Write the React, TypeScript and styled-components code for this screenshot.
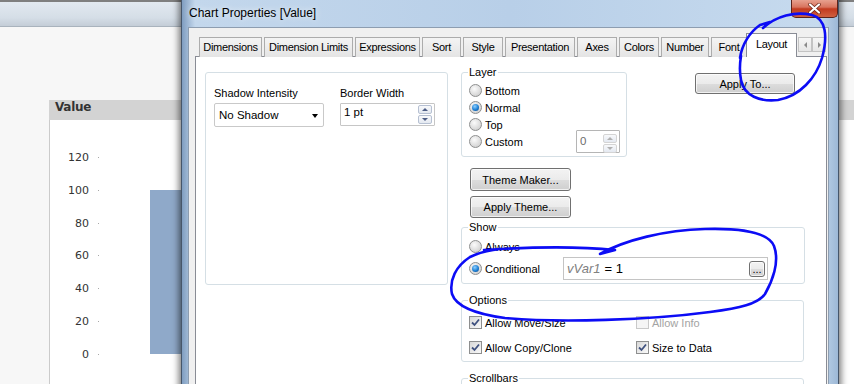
import React from 'react';
import styled, { createGlobalStyle } from 'styled-components';

const GlobalStyle = createGlobalStyle`
  html, body { margin: 0; padding: 0; }
  body {
    background: #f7f7f7;
    font-family: "Liberation Sans", Arial, sans-serif;
    font-size: 11px;
    color: #000;
  }
`;

const Desktop = styled.div`
  position: relative;
  width: 854px;
  height: 384px;
  overflow: hidden;
  background: #f7f7f7;
`;

/* ---------- QlikView main window behind the dialog ---------- */

const AppWindow = styled.div`
  display: flex;
  flex-direction: column;
  height: 100%;
`;

const AppTitle = styled.div`
  height: 24px;
  flex-shrink: 0;
  border-top: 2px solid #7f7f7f;
  border-bottom: 1px solid #a9b3bd;
  background: linear-gradient(#e2e9f0, #d5dee7 65%, #c4cdd7);
`;

const Sheet = styled.div`
  flex: 1;
  min-height: 0;
  background: #f7f7f7;
  padding: 73px 0 0 49px;
`;

const ChartBox = styled.div`
  width: 820px;
`;

const ChartHeader = styled.div`
  height: 20px;
  line-height: 20px;
  padding-left: 6px;
  background: #d3d3d3;
  font: bold 12px "DejaVu Sans", Verdana, sans-serif;
  letter-spacing: -0.3px;
  color: #333;
`;

const ChartBody = styled.div`
  height: 264px;
  display: flex;
  align-items: flex-start;
  background: #fff;
  border-left: 1px solid #cbcbcb;
`;

const Axis = styled.div`
  display: flex;
  flex-direction: column;
  padding-top: 21px;
  width: 49px;
`;

const AxisRow = styled.div`
  height: 32.83px;
  display: flex;
  align-items: center;
  justify-content: flex-end;
  gap: 9px;
  font: 11px "DejaVu Sans", Verdana, sans-serif;
  color: #333;
`;

const Tick = styled.span`
  width: 1px;
  height: 1px;
  background: #a8a8a8;
`;

const Plot = styled.div`
  margin: 37px 0 0 51px;
  height: 197px;
  display: flex;
  align-items: flex-end;
`;

const Bar = styled.div`
  width: 60px;
  background: #8fa9c9;
`;

/* ---------- Chart Properties dialog ---------- */

const Dialog = styled.div`
  position: absolute;
  left: 181px;
  top: -7px;
  width: 658px;
  height: 420px;
  box-sizing: border-box;
  border: 1px solid #46566a;
  border-radius: 7px 7px 0 0;
  background: linear-gradient(90deg, #7f9dc0, #c3d7ec 2%, #b8cfe8 50%, #c6daee 97%, #9db8d6);
  box-shadow: 0 0 7px 2px rgba(0, 0, 0, 0.55);
  padding: 0 9px 0 6px;
  display: flex;
  flex-direction: column;
`;

const TitleBar = styled.div`
  height: 33px;
  display: flex;
  align-items: flex-start;
  flex-shrink: 0;
`;

const Title = styled.div`
  margin-top: 12px;
  padding-left: 1px;
  font-size: 12px;
  line-height: 14px;
  color: #000;
  text-shadow: 0 0 6px rgba(255, 255, 255, 0.9);
`;

const CloseButton = styled.div`
  margin: 5px -9px 0 auto;
  width: 47px;
  height: 19px;
  box-sizing: border-box;
  border: 1px solid #5b231a;
  border-top: 0;
  border-radius: 0 0 5px 5px;
  background: linear-gradient(#e9a796, #d8745e 45%, #c23a1f 55%, #d0603f);
  display: flex;
  align-items: center;
  justify-content: center;
`;

const Client = styled.div`
  flex: 1;
  border: 1px solid #8d9db0;
  background: #f0f0f0;
  padding: 5px 1px 0 6px;
  display: flex;
  flex-direction: column;
`;

const TabStrip = styled.div`
  height: 24px;
  display: flex;
  align-items: flex-end;
  padding-left: 4px;
  flex-shrink: 0;
`;

const Tab = styled.div<{ $w: number; $active?: boolean }>`
  width: ${p => p.$w}px;
  height: ${p => (p.$active ? 24 : 20)}px;
  box-sizing: border-box;
  border: 1px solid ${p => (p.$active ? '#898c95' : '#acacac')};
  border-bottom: 0;
  background: ${p => (p.$active ? '#fff' : 'linear-gradient(#f4f4f4, #e4e4e4)')};
  margin: 0 ${p => (p.$active ? 1 : 2)}px 0 ${p => (p.$active ? -3 : 0)}px;
  position: relative;
  z-index: ${p => (p.$active ? 1 : 0)};
  text-align: center;
  line-height: ${p => (p.$active ? 21 : 18)}px;
  letter-spacing: -0.3px;
  white-space: nowrap;
`;

const TabScroll = styled.div`
  align-self: flex-start;
  margin-top: 4px;
  display: flex;
`;

const ScrollArrow = styled.div<{ $dir: 'left' | 'right' }>`
  width: 14px;
  height: 15px;
  box-sizing: border-box;
  border: 1px solid #c3c3c3;
  background: linear-gradient(#f6f6f6, #e6e6e6);
  display: flex;
  align-items: center;
  justify-content: center;
  &::after {
    content: '';
    border-top: 3px solid transparent;
    border-bottom: 3px solid transparent;
    ${p => (p.$dir === 'left' ? 'border-right: 3px solid #8a8a8a;' : 'border-left: 3px solid #8a8a8a;')}
  }
`;

const Panel = styled.div`
  flex: 1;
  margin-top: -1px;
  border: 1px solid #898c95;
  background: #fff;
  padding: 9px 0 0 9px;
  display: flex;
  align-items: flex-start;
  gap: 13px;
`;

const PlainBox = styled.div`
  width: 243px;
  height: 213px;
  margin-top: 6px;
  box-sizing: border-box;
  border: 1px solid #d5dfe5;
  border-radius: 3px;
  padding: 14px 8px 0;
  display: flex;
  align-items: flex-start;
  gap: 16px;
`;

const Field = styled.div`
  display: flex;
  flex-direction: column;
  gap: 3px;
`;

const FieldLabel = styled.div`
  line-height: 13px;
`;

const Combo = styled.div`
  width: 110px;
  height: 24px;
  box-sizing: border-box;
  border: 1px solid #c9c9c9;
  border-radius: 2px;
  background: #fff;
  padding-left: 4px;
  display: flex;
  align-items: center;
  font-size: 11.5px;
  &::after {
    content: '';
    margin: 1px 5px 0 auto;
    border-top: 4px solid #000;
    border-left: 3.5px solid transparent;
    border-right: 3.5px solid transparent;
  }
`;

const SpinEdit = styled.div<{ $w: number; $disabled?: boolean }>`
  width: ${p => p.$w}px;
  height: 23px;
  box-sizing: border-box;
  border: 1px solid ${p => (p.$disabled ? '#b5b5b5' : '#c6c6c6')};
  border-radius: 1px;
  background: #fff;
  display: flex;
  align-items: flex-start;
  padding: ${p => (p.$disabled ? 4 : 2)}px 2px 0 3px;
  color: ${p => (p.$disabled ? '#6d6d6d' : '#000')};
  font-size: 11.5px;
`;

const SpinValue = styled.span`
  flex: 1;
`;

const SpinButtons = styled.div`
  display: flex;
  flex-direction: column;
  gap: 1px;
  margin-top: -1px;
`;

const SpinArrow = styled.div<{ $up?: boolean; $disabled?: boolean }>`
  width: 14px;
  height: 9px;
  box-sizing: border-box;
  border: 1px solid ${p => (p.$disabled ? '#d4d4d4' : '#b6c0d2')};
  border-radius: 2px;
  background: linear-gradient(#f8f9fb, #e4e9f1);
  display: flex;
  align-items: center;
  justify-content: center;
  &::after {
    content: '';
    border-left: 3px solid transparent;
    border-right: 3px solid transparent;
    ${p =>
      p.$up
        ? `border-bottom: 3px solid ${p.$disabled ? '#b0b0b0' : '#4d5d85'};`
        : `border-top: 3px solid ${p.$disabled ? '#b0b0b0' : '#4d5d85'};`}
  }
`;

const RightCol = styled.div`
  width: 344px;
  display: flex;
  flex-direction: column;
  align-items: flex-start;
`;

const TopRow = styled.div`
  display: flex;
  align-items: flex-start;
`;

const Group = styled.fieldset<{ $w: number; $pt: number; $pb: number; $mt?: number }>`
  margin: ${p => p.$mt ?? 0}px 0 0;
  width: ${p => p.$w}px;
  min-width: 0;
  box-sizing: border-box;
  border: 1px solid #d5dfe5;
  border-radius: 3px;
  padding: ${p => p.$pt}px 6px ${p => p.$pb}px 7px;
`;

const Legend = styled.legend`
  padding: 0 1px;
  margin-left: -1px;
  font-size: 11px;
  line-height: 13px;
`;

const Stack = styled.div`
  display: flex;
  flex-direction: column;
`;

const RadioRow = styled.div<{ $h?: number; $mt?: number }>`
  height: ${p => p.$h ?? 17}px;
  margin-top: ${p => p.$mt ?? 0}px;
  display: flex;
  align-items: center;
`;

const RadioItem = styled.label<{ $w?: number }>`
  display: flex;
  align-items: center;
  gap: 3px;
  width: ${p => (p.$w ? `${p.$w}px` : 'auto')};
  flex-shrink: 0;
`;

const RadioDot = styled.span<{ $on?: boolean }>`
  width: 13px;
  height: 13px;
  box-sizing: border-box;
  border-radius: 50%;
  border: 1px solid #8e8f8f;
  background: radial-gradient(circle at 40% 35%, #fbfbfb, #d6d6d6 70%, #c4c4c4);
  display: flex;
  align-items: center;
  justify-content: center;
  &::after {
    content: '';
    display: ${p => (p.$on ? 'block' : 'none')};
    width: 7px;
    height: 7px;
    border-radius: 50%;
    background: radial-gradient(circle at 40% 35%, #8fd0ff, #1c7fd4 55%, #0c3f7c);
  }
`;

const PushButton = styled.div<{ $w: number; $h: number; $mt?: number; $ml?: number }>`
  width: ${p => p.$w}px;
  height: ${p => p.$h}px;
  margin: ${p => p.$mt ?? 0}px 0 0 ${p => p.$ml ?? 0}px;
  box-sizing: border-box;
  border: 1px solid #707070;
  border-radius: 3px;
  background: linear-gradient(#f3f3f3 0%, #ebebeb 50%, #dddddd 51%, #cfcfcf 100%);
  box-shadow: inset 0 0 0 1px rgba(255, 255, 255, 0.7);
  display: flex;
  align-items: center;
  justify-content: center;
  flex-shrink: 0;
  color: #000;
  font-size: 11px;
`;

const ExprBox = styled.div`
  width: 205px;
  height: 23px;
  box-sizing: border-box;
  border: 1px solid #c4c4c4;
  background: #fff;
  padding: 0 2px 0 3px;
  display: flex;
  align-items: center;
  font-size: 13px;
`;

const ExprVar = styled.i`
  color: #808080;
  margin-right: 4px;
`;

const ExprText = styled.span`
  flex: 1;
`;

const OptionsGrid = styled.div`
  display: grid;
  grid-template-columns: 167px auto;
  row-gap: 8px;
`;

const CheckItem = styled.label<{ $disabled?: boolean }>`
  height: 17px;
  display: flex;
  align-items: center;
  gap: 3px;
  color: ${p => (p.$disabled ? '#a3a3a3' : '#000')};
`;

const CheckBox = styled.span<{ $disabled?: boolean }>`
  width: 13px;
  height: 13px;
  box-sizing: border-box;
  border: 1px solid ${p => (p.$disabled ? '#c9c9c9' : '#8e8f8f')};
  background: ${p => (p.$disabled ? '#f5f5f5' : 'linear-gradient(135deg, #d8d8d8, #f9f9f9)')};
  display: flex;
  align-items: center;
  justify-content: center;
`;

const Ink = styled.svg`
  position: absolute;
  left: 0;
  top: 0;
  z-index: 10;
  pointer-events: none;
`;

const tabs = [
  { label: 'Dimensions', w: 63 },
  { label: 'Dimension Limits', w: 89 },
  { label: 'Expressions', w: 65 },
  { label: 'Sort', w: 39 },
  { label: 'Style', w: 40 },
  { label: 'Presentation', w: 70 },
  { label: 'Axes', w: 40 },
  { label: 'Colors', w: 40 },
  { label: 'Number', w: 48 },
  { label: 'Font', w: 36 },
  { label: 'Layout', w: 51, active: true },
];

const axisValues = [120, 100, 80, 60, 40, 20, 0];
const barValue = 100;

const Check = () => (
  <svg width="9" height="9" viewBox="0 0 9 9">
    <path d="M1 4.5 L3.5 7 L8 1.5" fill="none" stroke="#3f517f" strokeWidth="1.8" />
  </svg>
);

export default function App() {
  return (
    <Desktop>
      <GlobalStyle />
      <AppWindow>
        <AppTitle />
        <Sheet>
          <ChartBox>
            <ChartHeader>Value</ChartHeader>
            <ChartBody>
              <Axis>
                {axisValues.map(v => (
                  <AxisRow key={v}>
                    {v}
                    <Tick />
                  </AxisRow>
                ))}
              </Axis>
              <Plot>
                <Bar style={{ height: `${(barValue / 120) * 197}px` }} />
              </Plot>
            </ChartBody>
          </ChartBox>
        </Sheet>
      </AppWindow>

      <Dialog>
        <TitleBar>
          <Title>Chart Properties [Value]</Title>
          <CloseButton>
            <svg width="13" height="11" viewBox="0 0 13 11">
              <path d="M2 1.5 L11 9.5 M11 1.5 L2 9.5" stroke="#6a2416" strokeWidth="3.6" strokeLinecap="round" />
              <path d="M2 1.5 L11 9.5 M11 1.5 L2 9.5" stroke="#fff" strokeWidth="2.2" strokeLinecap="round" />
            </svg>
          </CloseButton>
        </TitleBar>
        <Client>
          <TabStrip>
            {tabs.map(t => (
              <Tab key={t.label} $w={t.w} $active={t.active}>
                {t.label}
              </Tab>
            ))}
            <TabScroll>
              <ScrollArrow $dir="left" />
              <ScrollArrow $dir="right" />
            </TabScroll>
          </TabStrip>
          <Panel>
            <PlainBox>
              <Field>
                <FieldLabel>Shadow Intensity</FieldLabel>
                <Combo>No Shadow</Combo>
              </Field>
              <Field>
                <FieldLabel>Border Width</FieldLabel>
                <SpinEdit $w={95}>
                  <SpinValue>1 pt</SpinValue>
                  <SpinButtons>
                    <SpinArrow $up />
                    <SpinArrow />
                  </SpinButtons>
                </SpinEdit>
              </Field>
            </PlainBox>

            <RightCol>
              <TopRow>
                <Group $w={166} $pt={3} $pb={6}>
                  <Legend>Layer</Legend>
                  <Stack>
                    <RadioRow>
                      <RadioItem><RadioDot />Bottom</RadioItem>
                    </RadioRow>
                    <RadioRow>
                      <RadioItem><RadioDot $on />Normal</RadioItem>
                    </RadioRow>
                    <RadioRow>
                      <RadioItem><RadioDot />Top</RadioItem>
                    </RadioRow>
                    <RadioRow>
                      <RadioItem $w={107}><RadioDot />Custom</RadioItem>
                      <SpinEdit $w={44} $disabled style={{ margin: '-3px 0' }}>
                        <SpinValue>0</SpinValue>
                        <SpinButtons>
                          <SpinArrow $up $disabled />
                          <SpinArrow $disabled />
                        </SpinButtons>
                      </SpinEdit>
                    </RadioRow>
                  </Stack>
                </Group>
                <PushButton $w={100} $h={21} $mt={7} $ml={68}>Apply To...</PushButton>
              </TopRow>

              <PushButton $w={101} $h={23} $mt={11} $ml={9}>Theme Maker...</PushButton>
              <PushButton $w={101} $h={22} $mt={5} $ml={9}>Apply Theme...</PushButton>

              <Group $w={344} $pt={4} $pb={3} $mt={3}>
                <Legend>Show</Legend>
                <Stack>
                  <RadioRow>
                    <RadioItem><RadioDot />Always</RadioItem>
                  </RadioRow>
                  <RadioRow $h={23} $mt={2}>
                    <RadioItem $w={94}><RadioDot $on />Conditional</RadioItem>
                    <ExprBox>
                      <ExprVar>vVar1</ExprVar>
                      <ExprText>= 1</ExprText>
                      <PushButton $w={16} $h={16}>...</PushButton>
                    </ExprBox>
                  </RadioRow>
                </Stack>
              </Group>

              <Group $w={343} $pt={7} $pb={5} $mt={10}>
                <Legend>Options</Legend>
                <OptionsGrid>
                  <CheckItem><CheckBox><Check /></CheckBox>Allow Move/Size</CheckItem>
                  <CheckItem $disabled><CheckBox $disabled />Allow Info</CheckItem>
                  <CheckItem><CheckBox><Check /></CheckBox>Allow Copy/Clone</CheckItem>
                  <CheckItem><CheckBox><Check /></CheckBox>Size to Data</CheckItem>
                </OptionsGrid>
              </Group>

              <Group $w={343} $pt={40} $pb={0} $mt={10}>
                <Legend>Scrollbars</Legend>
              </Group>
            </RightCol>
          </Panel>
        </Client>
      </Dialog>

      <Ink width="854" height="384" viewBox="0 0 854 384">
        <g fill="none" stroke="#0c0cf5" strokeWidth="2.6" strokeLinecap="round" strokeLinejoin="round">
          <path d="M740 58 C742 44, 750 32, 760 25 L770 22 L763 28 C776 16, 795 11, 812 15 C826 19, 828 36, 822 58 C816 78, 800 96, 778 100 C760 102, 744 96, 741 80 C739 70, 740 62, 741 56" />
          <path d="M484 250 C530 247, 575 246, 615 250 L600 254 C625 240, 665 230, 705 229 C740 228, 768 232, 774 246 C780 262, 772 282, 765 294 C758 304, 740 308, 710 312 C650 320, 560 323, 505 318 C475 314, 456 306, 452 294 C449 280, 456 266, 470 257 C480 252, 490 250, 500 249" />
        </g>
      </Ink>
    </Desktop>
  );
}
